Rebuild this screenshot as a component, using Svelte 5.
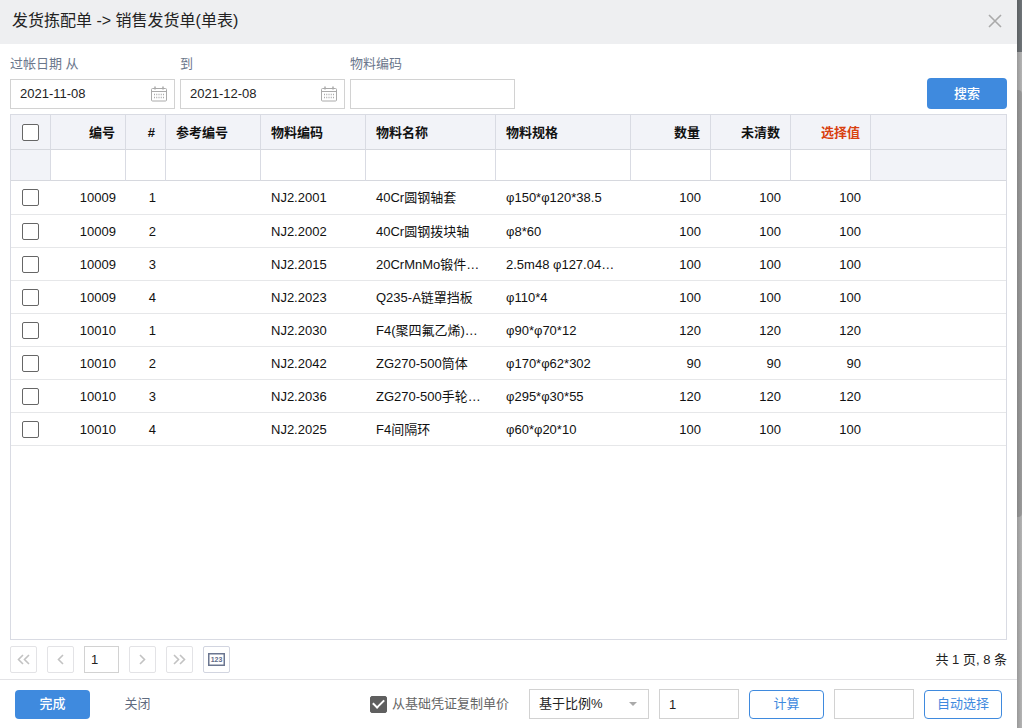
<script>
	const columns = [
		{ key: 'doc', label: '编号', width: 75, align: 'right' },
		{ key: 'line', label: '#', width: 40, align: 'right' },
		{ key: 'ref', label: '参考编号', width: 95 },
		{ key: 'code', label: '物料编码', width: 105 },
		{ key: 'name', label: '物料名称', width: 130 },
		{ key: 'spec', label: '物料规格', width: 135 },
		{ key: 'qty', label: '数量', width: 80, align: 'right' },
		{ key: 'open', label: '未清数', width: 80, align: 'right' },
		{ key: 'pick', label: '选择值', width: 80, align: 'right', accent: true }
	]

	const toRow = ([doc, line, code, name, spec, qty]) => ({
		doc, line, ref: '', code, name, spec, qty, open: qty, pick: qty, checked: false
	})

	let rows = $state([
		[10009, 1, 'NJ2.2001', '40Cr圆钢轴套', 'φ150*φ120*38.5', 100],
		[10009, 2, 'NJ2.2002', '40Cr圆钢拨块轴', 'φ8*60', 100],
		[10009, 3, 'NJ2.2015', '20CrMnMo锻件…', '2.5m48 φ127.04…', 100],
		[10009, 4, 'NJ2.2023', 'Q235-A链罩挡板', 'φ110*4', 100],
		[10010, 1, 'NJ2.2030', 'F4(聚四氟乙烯)…', 'φ90*φ70*12', 120],
		[10010, 2, 'NJ2.2042', 'ZG270-500筒体', 'φ170*φ62*302', 90],
		[10010, 3, 'NJ2.2036', 'ZG270-500手轮…', 'φ295*φ30*55', 120],
		[10010, 4, 'NJ2.2025', 'F4间隔环', 'φ60*φ20*10', 100]
	].map(toRow))

	let from = $state('2021-11-08')
	let to = $state('2021-12-08')
	let material = $state('')
	let page = $state('1')
	let copyPrice = $state(true)
	let ratio = $state('1')
	let amount = $state('')
	let allChecked = $derived(rows.every((row) => row.checked))

	const toggleAll = (event) => {
		const checked = event.currentTarget.checked
		rows.forEach((row) => (row.checked = checked))
	}
</script>

{#snippet calendar()}
	<svg width="16" height="16" viewBox="0 0 16 16" fill="none" stroke="#aaa">
		<rect x="0.5" y="2.5" width="15" height="12.500" rx="1" />
		<path d="M1 5.500h14" />
		<path d="M4 0.500v3M12 0.500v3" stroke-width="1.5" />
		<path d="M3 8.500h10M3 11.500h10" stroke-dasharray="1 1.250" stroke-width="1.500" />
	</svg>
{/snippet}

{#snippet chevrons(path)}
	<svg width="13" height="11" viewBox="0 0 13 11" fill="none" stroke="#c2c2c2" stroke-width="1.6">
		<path d={path} />
	</svg>
{/snippet}

<div class="screen">
	<main class="dialog">
		<header>
			<h1>发货拣配单 -&gt; 销售发货单(单表)</h1>
			<button class="close" aria-label="关闭">
				<svg width="14" height="14" viewBox="0 0 14 14" stroke="#aaa" stroke-width="1.6">
					<path d="M1 1l12 12M13 1L1 13" />
				</svg>
			</button>
		</header>

		<form class="search" onsubmit={(e) => e.preventDefault()}>
			<div class="field">
				<label for="from">过帐日期 从</label>
				<div class="box">
					<input id="from" bind:value={from} />
					{@render calendar()}
				</div>
			</div>
			<div class="field">
				<label for="to">到</label>
				<div class="box">
					<input id="to" bind:value={to} />
					{@render calendar()}
				</div>
			</div>
			<div class="field">
				<label for="material">物料编码</label>
				<div class="box">
					<input id="material" bind:value={material} />
				</div>
			</div>
			<button class="primary submit">搜索</button>
		</form>

		<section class="grid">
			<table>
				<colgroup>
					<col class="check-col" />
					{#each columns as col}
						<col style:width="{col.width}px" />
					{/each}
					<col />
				</colgroup>
				<thead>
					<tr>
						<th class="check">
							<input type="checkbox" aria-label="全选" checked={allChecked} onchange={toggleAll} />
						</th>
						{#each columns as col}
							<th class:right={col.align === 'right'} class:accent={col.accent}>{col.label}</th>
						{/each}
						<th></th>
					</tr>
					<tr class="filters">
						<td></td>
						{#each columns as col}
							<td class="filter"><input aria-label={col.label} /></td>
						{/each}
						<td></td>
					</tr>
				</thead>
				<tbody>
					{#each rows as row}
						<tr>
							<td class="check">
								<input type="checkbox" aria-label={row.code} bind:checked={row.checked} />
							</td>
							{#each columns as col}
								<td class:right={col.align === 'right'}>{row[col.key]}</td>
							{/each}
							<td></td>
						</tr>
					{/each}
				</tbody>
			</table>
		</section>

		<nav class="pager">
			<button aria-label="首页">{@render chevrons('M6 1L1.5 5.5L6 10M12 1L7.5 5.5L12 10')}</button>
			<button aria-label="上一页">{@render chevrons('M9 1L4.5 5.5L9 10')}</button>
			<input aria-label="页码" bind:value={page} />
			<button aria-label="下一页">{@render chevrons('M4 1L8.5 5.5L4 10')}</button>
			<button aria-label="末页">{@render chevrons('M1 1L5.5 5.5L1 10M7 1L11.5 5.5L7 10')}</button>
			<button class="count" aria-label="行数">
				<svg width="17" height="13" viewBox="0 0 17 13">
					<rect x="0.75" y="0.75" width="15.5" height="11.5" fill="none" stroke="#6b7690" stroke-width="1.5" />
					<text x="8.5" y="9" text-anchor="middle">123</text>
				</svg>
			</button>
			<span class="total">共 1 页, 8 条</span>
		</nav>

		<footer>
			<button class="primary">完成</button>
			<button class="plain">关闭</button>
			<label class="copy">
				<input type="checkbox" bind:checked={copyPrice} />
				从基础凭证复制单价
			</label>
			<div class="select">
				<select aria-label="计算方式">
					<option>基于比例%</option>
				</select>
			</div>
			<input class="number" aria-label="比例" bind:value={ratio} />
			<button class="outline">计算</button>
			<input class="number" aria-label="数量" bind:value={amount} />
			<button class="outline auto">自动选择</button>
		</footer>
	</main>

	<!-- the dimmed page behind the dialog, with its scrollbar -->
	<div class="behind">
		<div class="topbar"></div>
		<div class="track">
			<div class="thumb"></div>
		</div>
	</div>
</div>

<style>
	:global(body) {
		margin: 0;
	}
	.screen,
	.screen * {
		box-sizing: border-box;
	}
	.screen {
		display: flex;
		height: 100vh;
		font-family: 'Liberation Sans', 'Noto Sans CJK SC', sans-serif;
		font-size: 13px;
		line-height: 20px;
		color: #222;
	}
	button,
	input,
	select {
		font: inherit;
		color: inherit;
		margin: 0;
		padding: 0;
		border: none;
		background: none;
		outline: none;
	}
	button {
		cursor: pointer;
	}
	svg {
		display: block;
	}
	.dialog {
		flex: 1;
		min-width: 0;
		display: flex;
		flex-direction: column;
		background: #fff;
	}
	header {
		display: flex;
		align-items: center;
		justify-content: space-between;
		height: 44px;
		padding: 0 15px 2px 12px;
		background: #eeeff1;
	}
	h1 {
		margin: 0;
		font-size: 16px;
		font-weight: 400;
		line-height: 24px;
	}
	.search {
		display: flex;
		align-items: flex-end;
		gap: 5px;
		padding: 10px 10px 5px;
	}
	.field {
		width: 165px;
	}
	.field label {
		display: block;
		margin-bottom: 5px;
		color: #6b778c;
	}
	.box {
		display: flex;
		align-items: center;
		height: 30px;
		padding: 0 7px 0 9px;
		border: 1px solid #d2d2d2;
	}
	.box input {
		flex: 1;
		min-width: 0;
	}
	.primary {
		width: 75px;
		height: 29px;
		border-radius: 4px;
		background: #3f8ade;
		color: #fff;
		font-weight: 500;
	}
	.submit {
		width: 80px;
		height: 31px;
		margin-left: auto;
	}
	.grid {
		flex: 1;
		min-height: 0;
		overflow: hidden;
		margin: 0 10px;
		border: 1px solid #d9dbe3;
	}
	table {
		width: 100%;
		table-layout: fixed;
		border-spacing: 0;
		color: #111;
	}
	.check-col {
		width: 40px;
	}
	th,
	td {
		height: 33px;
		padding: 1px 10px 0;
		border-bottom: 1px solid #e6e7e9;
		text-align: left;
		white-space: nowrap;
		overflow: hidden;
	}
	th {
		height: 35px;
		font-weight: 700;
	}
	thead th,
	thead td {
		border-right: 1px solid #d9dbe3;
		border-bottom-color: #d6d8de;
		background: #f2f3f8;
	}
	thead th:last-child,
	thead td:last-child {
		border-right: none;
	}
	.filters td {
		height: 31px;
		padding: 0;
	}
	.filters .filter {
		background: #fff;
	}
	.filter input {
		display: block;
		width: 100%;
		height: 30px;
		padding: 0 10px;
	}
	tbody tr:first-child td {
		height: 34px;
	}
	.right {
		text-align: right;
	}
	.accent {
		color: #d9400f;
	}
	.check {
		padding: 0 11px;
	}
	input[type='checkbox'] {
		appearance: none;
		display: grid;
		place-content: center;
		width: 17px;
		height: 17px;
		border: 1px solid #666;
		border-radius: 2px;
		background: #fff;
	}
	input[type='checkbox']:checked {
		background: #5f5f5f;
		border-color: #5f5f5f;
	}
	input[type='checkbox']:checked::after {
		content: '';
		width: 9px;
		height: 5px;
		margin-bottom: 3px;
		border: solid #fff;
		border-width: 0 0 2px 2px;
		transform: rotate(-45deg);
	}
	.pager {
		display: flex;
		align-items: center;
		gap: 10px;
		padding: 6px 10px;
	}
	.pager button {
		display: grid;
		place-content: center;
		width: 27px;
		height: 27px;
		border: 1px solid #e3e3e6;
		border-radius: 2px;
	}
	.pager .count {
		border-color: #d2d5e0;
	}
	.pager input {
		width: 35px;
		height: 27px;
		padding: 0 6px;
		border: 1px solid #d2d2d2;
	}
	.count text {
		font-size: 7px;
		font-weight: 700;
		fill: #5f6b88;
	}
	.total {
		margin-left: auto;
	}
	footer {
		display: flex;
		align-items: center;
		gap: 10px;
		padding: 9px 15px;
		border-top: 1px solid #e3e3e6;
	}
	.plain {
		width: 75px;
		height: 29px;
		color: #5f6b80;
	}
	.copy {
		display: flex;
		align-items: center;
		gap: 5px;
		margin-left: auto;
		margin-right: 10px;
		color: #666;
	}
	.select {
		display: flex;
		align-items: center;
		width: 120px;
		height: 30px;
		padding-right: 11px;
		border: 1px solid #d2d2d2;
	}
	.select select {
		appearance: none;
		flex: 1;
		min-width: 0;
		height: 28px;
		padding-left: 9px;
	}
	.select::after {
		content: '';
		border: 4px solid transparent;
		border-top-color: #aaa;
		border-bottom: none;
	}
	.number {
		width: 80px;
		height: 30px;
		padding: 0 9px;
		border: 1px solid #d2d2d2;
	}
	.outline {
		width: 75px;
		height: 29px;
		border: 1px solid #3f8ade;
		border-radius: 4px;
		color: #3f8ade;
	}
	.auto {
		width: 78px;
	}
	.behind {
		display: flex;
		flex-direction: column;
		width: 5px;
		background: linear-gradient(to right, #999, #b4b4b4);
	}
	.topbar {
		height: 52px;
		background: linear-gradient(to right, #5c6063, #6f7478);
	}
	.track {
		flex: 1;
		padding-top: 38px;
	}
	.thumb {
		height: 67%;
		border-radius: 0 4px 4px 0;
		background: linear-gradient(to right, #868686, #9b9b9b);
	}
</style>
